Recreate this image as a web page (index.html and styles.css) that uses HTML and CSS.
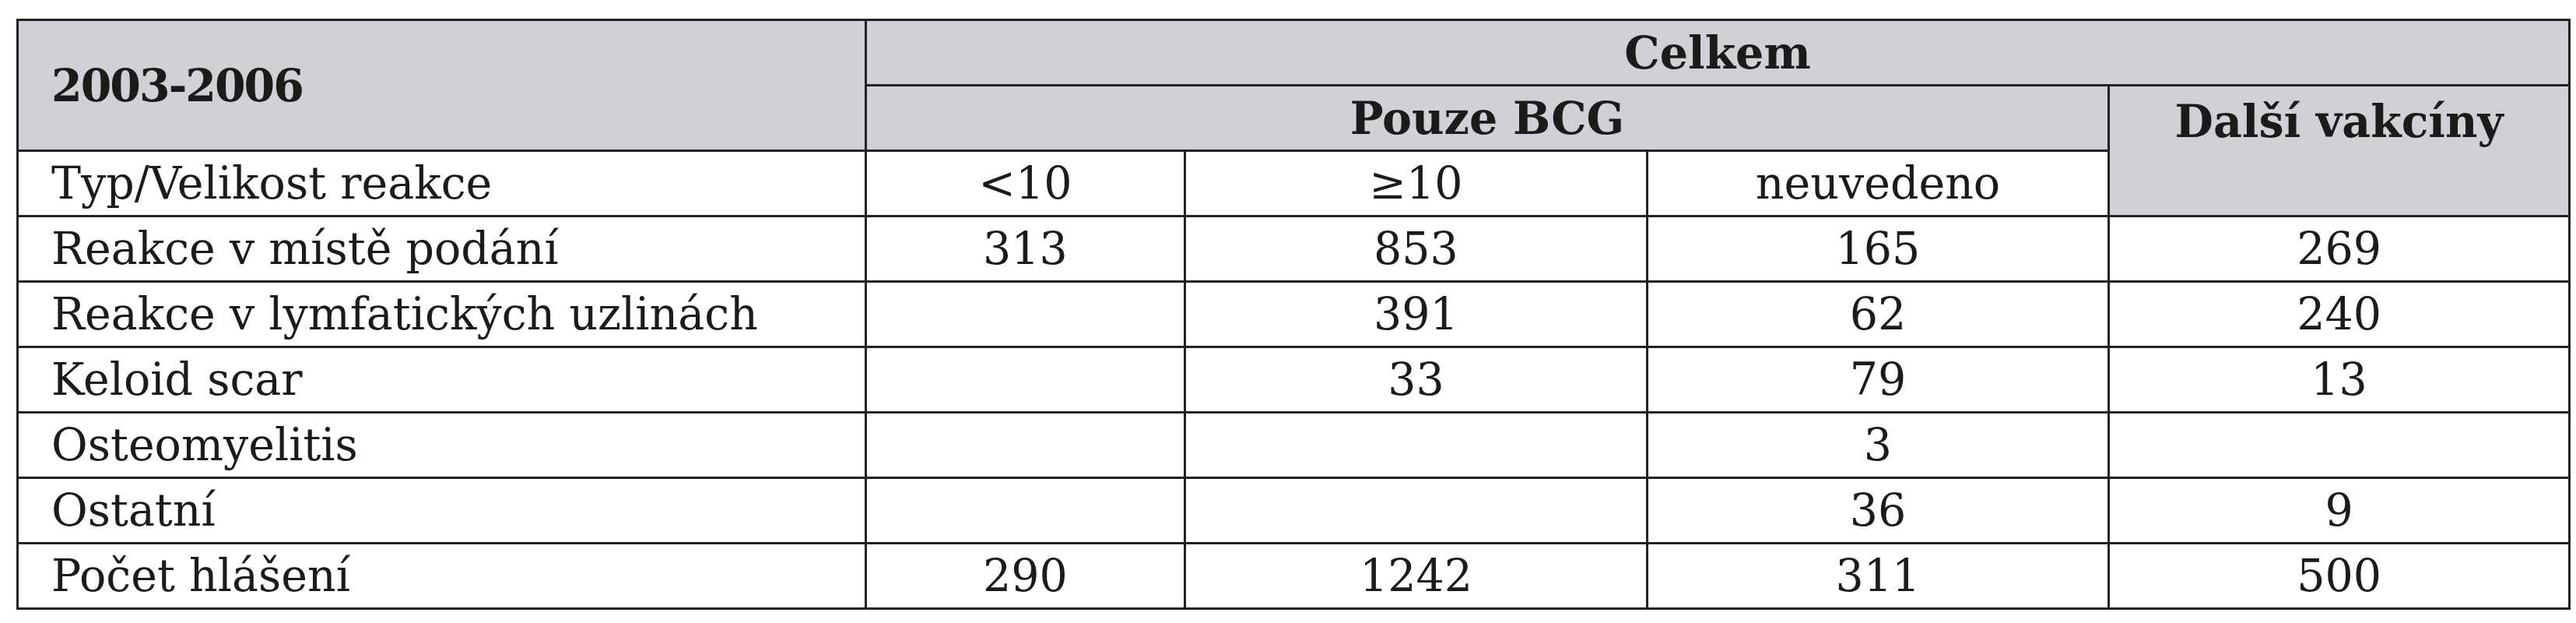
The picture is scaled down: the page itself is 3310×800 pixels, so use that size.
FILE: index.html
```html
<!DOCTYPE html>
<html lang="cs">
<head>
<meta charset="utf-8">
<title>Reakce po BCG 2003-2006</title>
<link rel="stylesheet" href="styles.css">
</head>
<body>
<table class="report">
  <colgroup>
    <col class="c-label">
    <col class="c-small">
    <col class="c-mid">
    <col class="c-mid2">
    <col class="c-last">
  </colgroup>
  <thead>
    <tr class="hrow">
      <th class="head left" rowspan="2">2003-2006</th>
      <th class="head" colspan="4">Celkem</th>
    </tr>
    <tr class="hrow">
      <th class="head" colspan="3">Pouze BCG</th>
      <th class="head top" rowspan="2">Další vakcíny</th>
    </tr>
    <tr>
      <td class="left">Typ/Velikost reakce</td>
      <td>&lt;10</td>
      <td>≥10</td>
      <td>neuvedeno</td>
    </tr>
  </thead>
  <tbody>
    <tr><td class="left">Reakce v místě podání</td><td>313</td><td>853</td><td>165</td><td>269</td></tr>
    <tr><td class="left">Reakce v lymfatických uzlinách</td><td></td><td>391</td><td>62</td><td>240</td></tr>
    <tr><td class="left">Keloid scar</td><td></td><td>33</td><td>79</td><td>13</td></tr>
    <tr><td class="left">Osteomyelitis</td><td></td><td></td><td>3</td><td></td></tr>
    <tr><td class="left">Ostatní</td><td></td><td></td><td>36</td><td>9</td></tr>
    <tr><td class="left">Počet hlášení</td><td>290</td><td>1242</td><td>311</td><td>500</td></tr>
  </tbody>
</table>
</body>
</html>
```
FILE: styles.css
```css
html, body {
  margin: 0;
  padding: 0;
  background: #ffffff;
}

body {
  padding: 24px 0 0 21px;
}

.report {
  border-collapse: collapse;
  table-layout: fixed;
  width: 3279px;
  font-family: "DejaVu Serif", "Liberation Serif", serif;
  font-size: 57px;
  color: #1b1b1b;
  border: 3px solid #222222;
}

.c-label { width: 1090px; }
.c-small { width: 410px; }
.c-mid { width: 594px; }
.c-mid2 { width: 593px; }
.c-last { width: 592px; }

.report td,
.report th {
  border: 3px solid #222222;
  height: 81px;
  padding: 0;
  text-align: center;
  vertical-align: middle;
  font-weight: normal;
  line-height: 1;
}

.report .head {
  background: #d0d1d6;
  font-weight: bold;
}

.report th.left {
  letter-spacing: -2px;
}

.report .left {
  text-align: left;
  padding-left: 42px;
}

.report .top {
  vertical-align: top;
  padding-top: 16px;
}
```
